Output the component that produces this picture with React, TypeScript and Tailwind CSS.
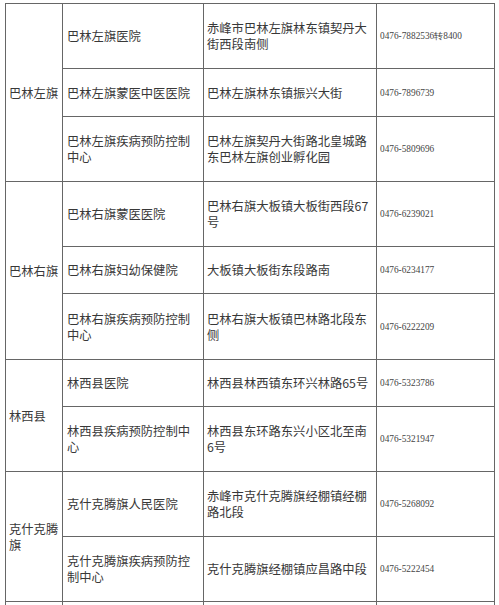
const ROWS: {
  group?: { name: string[]; span: number }
  org: string[]
  addr: string[]
  phone: string
  h: string
}[] = [
  { group: { name: ['巴林左旗'], span: 3 }, org: ['巴林左旗医院'], addr: ['赤峰市巴林左旗林东镇契丹大', '街西段南侧'], phone: '0476-7882536转8400', h: 'h-[65px]' },
  { org: ['巴林左旗蒙医中医医院'], addr: ['巴林左旗林东镇振兴大街'], phone: '0476-7896739', h: 'h-[48px]' },
  { org: ['巴林左旗疾病预防控制', '中心'], addr: ['巴林左旗契丹大街路北皇城路', '东巴林左旗创业孵化园'], phone: '0476-5809696', h: 'h-[65px]' },
  { group: { name: ['巴林右旗'], span: 3 }, org: ['巴林右旗蒙医医院'], addr: ['巴林右旗大板镇大板街西段67', '号'], phone: '0476-6239021', h: 'h-[65px]' },
  { org: ['巴林右旗妇幼保健院'], addr: ['大板镇大板街东段路南'], phone: '0476-6234177', h: 'h-[47px]' },
  { org: ['巴林右旗疾病预防控制', '中心'], addr: ['巴林右旗大板镇巴林路北段东', '侧'], phone: '0476-6222209', h: 'h-[66px]' },
  { group: { name: ['林西县'], span: 2 }, org: ['林西县医院'], addr: ['林西县林西镇东环兴林路65号'], phone: '0476-5323786', h: 'h-[47px]' },
  { org: ['林西县疾病预防控制中', '心'], addr: ['林西县东环路东兴小区北至南', '6号'], phone: '0476-5321947', h: 'h-[65px]' },
  { group: { name: ['克什克腾', '旗'], span: 2 }, org: ['克什克腾旗人民医院'], addr: ['赤峰市克什克腾旗经棚镇经棚', '路北段'], phone: '0476-5268092', h: 'h-[65px]' },
  { org: ['克什克腾旗疾病预防控', '制中心'], addr: ['克什克腾旗经棚镇应昌路中段'], phone: '0476-5222454', h: 'h-[65px]' },
]

function Lines({ lines }: { lines: string[] }) {
  return (
    <>
      {lines.map((l, i) => (
        <span key={i} className="block whitespace-nowrap">{l}</span>
      ))}
    </>
  )
}

const cell = 'border border-[#666] align-middle'

export default function App() {
  return (
    <div className="w-[499px] h-[605px] overflow-hidden bg-white pt-[3px] pl-[5px]">
      <table
        className="table-fixed border-collapse text-[12.3px] leading-4 text-[#383838]"
        style={{ fontFamily: '"Noto Sans CJK SC", "Noto Sans", sans-serif' }}
      >
        <colgroup>
          <col className="w-[57px]" />
          <col className="w-[141px]" />
          <col className="w-[173px]" />
          <col className="w-[118px]" />
        </colgroup>
        <tbody>
          {ROWS.map((r, i) => (
            <tr key={i} className={r.h}>
              {r.group && (
                <td rowSpan={r.group.span} className={`${cell} pl-[3px]`}>
                  <Lines lines={r.group.name} />
                </td>
              )}
              <td className={`${cell} pl-[4px]`}>
                <Lines lines={r.org} />
              </td>
              <td className={`${cell} pl-[3px]`}>
                <Lines lines={r.addr} />
              </td>
              <td className={`${cell} pl-[3px] text-[9.3px] text-[#444] font-['Liberation_Serif',serif]`}>
                {r.phone}
              </td>
            </tr>
          ))}
          <tr className="h-[40px]">
            <td className={cell} />
            <td className={cell} />
            <td className={cell} />
            <td className={cell} />
          </tr>
        </tbody>
      </table>
    </div>
  )
}
